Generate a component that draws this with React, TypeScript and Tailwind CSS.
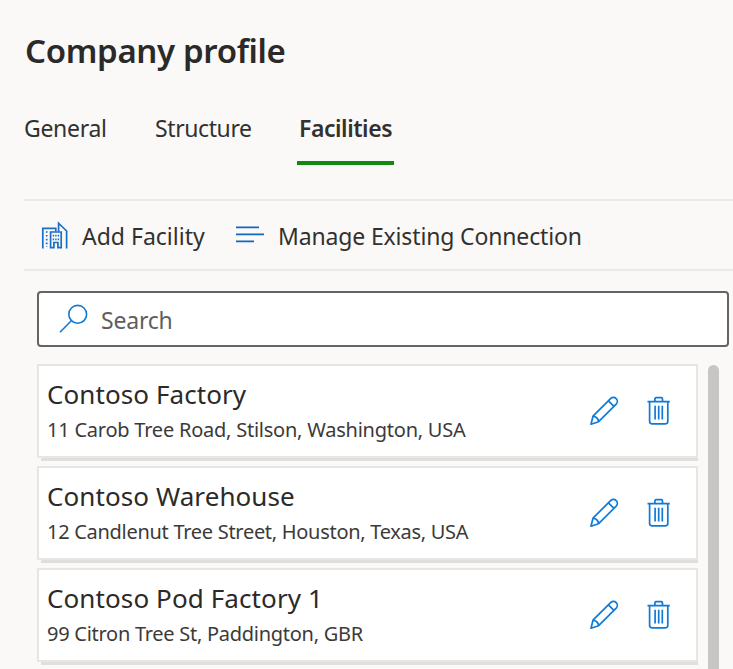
import React from "react";

const facilities = [
  { name: "Contoso Factory", address: "11 Carob Tree Road, Stilson, Washington, USA", ns: "tracking-[0.08px]", as: "tracking-[-0.23px]" },
  { name: "Contoso Warehouse", address: "12 Candlenut Tree Street, Houston, Texas, USA", ns: "tracking-[0.08px]", as: "tracking-[-0.29px]" },
  { name: "Contoso Pod Factory 1", address: "99 Citron Tree St, Paddington, GBR", ns: "tracking-[0.1px]", as: "tracking-[-0.27px]" },
];

function BuildingIcon() {
  return (
    <svg width="27" height="28" viewBox="0 0 27 28" fill="none" stroke="#1a6fc4" strokeWidth="1.7" className="shrink-0">
      <path d="M1.8 27.5V7.3H14.8V10.5M17.6 10.5V2.2L25.6 10V27.5" />
      <path d="M9.6 27.5V11H20.2V27.5M9 26.7H12.9V21.5H16.9V26.7H20.8" />
      <path d="M5.7 10.2V26" strokeDasharray="1.6 2.2" />
      <path d="M12.4 13.8V19.5M14.9 13.8V19.5M17.4 13.8V19.5" strokeDasharray="1.6 2.2" strokeWidth="1.4" />
    </svg>
  );
}

function LinesIcon() {
  return (
    <svg width="28" height="18" viewBox="0 0 28 18" stroke="#1068bf" strokeWidth="1.8" className="shrink-0">
      <path d="M0 1.4H23M0 8.4H28M0 15.4H18" />
    </svg>
  );
}

function SearchIcon() {
  return (
    <svg width="30" height="30" viewBox="0 0 30 30" fill="none" stroke="#1478d4" strokeWidth="1.6" className="shrink-0">
      <circle cx="18.7" cy="10.3" r="8.9" />
      <path d="M12.3 16.8L1 28.2" />
    </svg>
  );
}

function PencilIcon() {
  return (
    <svg width="30" height="30" viewBox="0 0 30 30" fill="none" stroke="#0f7ad8" strokeWidth="1.7" strokeLinejoin="round">
      <path d="M2 28.2L4 20.2L21.6 2.6C23.2 1 25.7 1 27.2 2.6C28.7 4.1 28.7 6.5 27.2 8.1L9.6 25.7L2 28.2Z" />
      <path d="M19.4 4.8L25 10.3M4 20.2C7 20.6 9.2 22.7 9.6 25.7" />
    </svg>
  );
}

function TrashIcon() {
  return (
    <svg width="24" height="30" viewBox="0 0 24 30" fill="none" stroke="#0f7ad8" strokeWidth="1.7">
      <path d="M.5 5.6H22.8M2.6 5.6V25.6C2.6 27.1 3.4 27.8 4.8 27.8H18.6C20 27.8 20.8 27.1 20.8 25.6V5.6M7.9 5.5V2.9C7.9 2.1 8.3 1.7 9.1 1.7H14.3C15.1 1.7 15.5 2.1 15.5 2.9V5.5M8.1 9.8V23.5M11.7 9.8V23.5M15.3 9.8V23.5" />
    </svg>
  );
}

export default function App() {
  return (
    <div className="h-[669px] w-[733px] overflow-hidden bg-[#faf9f8] font-['Noto_Sans','Open_Sans',sans-serif] font-[370] text-[#323130]">
      <h1 className="pt-[26px] pl-[25px] text-[33px] leading-[50px] font-[560] whitespace-nowrap text-[#2b2a29]">
        <span className="tracking-[-0.34px]">Company profile</span>
      </h1>
      <nav className="mt-[30px] flex h-[59px] pl-6 text-[23px] leading-[44px] whitespace-nowrap">
        <div className="w-[131px]"><span className="tracking-[-0.3px]">General</span></div>
        <div className="w-[142px]"><span className="tracking-[-0.4px]">Structure</span></div>
        <div className="h-[59px] w-[97px] border-b-4 border-[#128712] pl-[2px] font-[560]"><span className="tracking-[-0.45px]">Facilities</span></div>
      </nav>
      <div className="mt-[34px] ml-6 flex h-[72px] items-center border-y-2 border-[#ebeae9] pl-[17px] text-[23px] whitespace-nowrap">
        <BuildingIcon />
        <div className="ml-[14px] w-[154px] pt-[2px]"><span>Add Facility</span></div>
        <LinesIcon />
        <div className="ml-[14px] pt-[2px]"><span className="tracking-[-0.15px]">Manage Existing Connection</span></div>
      </div>
      <div className="mt-5 ml-[37px] flex h-[56px] w-[692px] items-center rounded-[4px] border-2 border-[#666462] bg-white pl-5 text-[23px] text-[#605e5c]">
        <SearchIcon />
        <span className="ml-[12px] pt-[2px] tracking-[-0.2px]">Search</span>
      </div>
      <div className="mt-[17px] flex pl-[37px]">
        <div className="flex w-[661px] flex-col gap-[5px]">
          {facilities.map((f) => (
            <div key={f.name} className="h-[97px] shrink-0">
              <div className="flex h-[94px] border-2 border-[#e7e6e5] bg-white pl-[8px] whitespace-nowrap">
                <div className="w-[542px]">
                  <div className="pt-[11px] text-[26px] leading-[34px] text-[#2b2a29]"><span className={f.ns}>{f.name}</span></div>
                  <div className="pt-px text-[20px] leading-[36px] text-[#3b3a39]"><span className={f.as}>{f.address}</span></div>
                </div>
                <div className="flex gap-[28px] pt-[30px]">
                  <PencilIcon />
                  <TrashIcon />
                </div>
              </div>
              <div className="ml-[4px] h-[3px] bg-[#e1dfdd]" />
            </div>
          ))}
        </div>
        <div className="mt-px ml-[10px] h-[330px] w-[11px] rounded-t-full bg-[#c8c6c4]" />
      </div>
    </div>
  );
}
